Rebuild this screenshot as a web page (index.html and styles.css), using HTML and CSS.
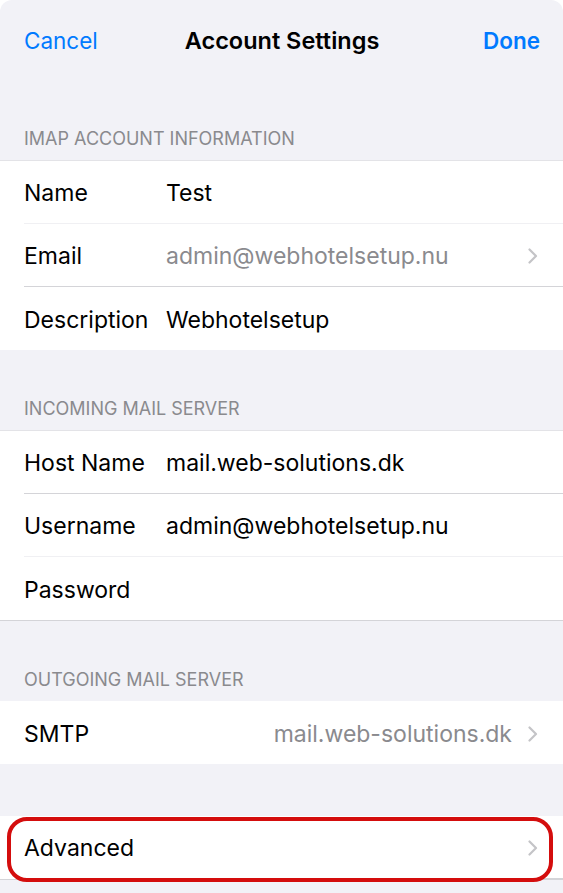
FILE: index.html
```html
<!DOCTYPE html>
<html lang="en">
<head>
  <meta charset="UTF-8">
  <meta name="viewport" content="width=device-width, initial-scale=1.0">
  <title>Account Settings</title>
  <link rel="stylesheet" href="styles.css">
</head>
<body>

  <div class="sheet">
    <div class="nav">
      <span class="nav-btn">Cancel</span>
      <span class="nav-title">Account Settings</span>
      <span class="nav-btn done">Done</span>
    </div>

    <div class="section-header first">IMAP ACCOUNT INFORMATION</div>
    <div class="group top-line">
      <div class="row"><div class="row-inner faint">
        <span class="label">Name</span><span class="value">Test</span>
      </div></div>
      <div class="row"><div class="row-inner">
        <span class="label">Email</span><span class="value muted">admin@webhotelsetup.nu</span>
        <svg class="chevron" width="10" height="16" viewBox="0 0 10 16"><path d="M1.5 1.5 L8 8 L1.5 14.5" /></svg>
      </div></div>
      <div class="row"><div class="row-inner">
        <span class="label">Description</span><span class="value">Webhotelsetup</span>
      </div></div>
    </div>

    <div class="section-header">INCOMING MAIL SERVER</div>
    <div class="group top-line bottom-line">
      <div class="row"><div class="row-inner">
        <span class="label">Host Name</span><span class="value">mail.web-solutions.dk</span>
      </div></div>
      <div class="row"><div class="row-inner faint">
        <span class="label">Username</span><span class="value">admin@webhotelsetup.nu</span>
      </div></div>
      <div class="row"><div class="row-inner">
        <span class="label">Password</span><span class="value"></span>
      </div></div>
    </div>

    <div class="section-header">OUTGOING MAIL SERVER</div>
    <div class="group">
      <div class="row"><div class="row-inner">
        <span class="label">SMTP</span><span class="value right muted">mail.web-solutions.dk</span>
        <svg class="chevron" width="10" height="16" viewBox="0 0 10 16"><path d="M1.5 1.5 L8 8 L1.5 14.5" /></svg>
      </div></div>
    </div>

    <div class="group advanced bottom-line">
      <div class="row"><div class="row-inner">
        <span class="label">Advanced</span><span class="value"></span>
        <svg class="chevron" width="10" height="16" viewBox="0 0 10 16"><path d="M1.5 1.5 L8 8 L1.5 14.5" /></svg>
      </div></div>
      <div class="highlight"></div>
    </div>
  </div>

</body>
</html>
```

FILE: styles.css
```css
body {
  margin: 0;
  padding: 0;
  background: #ffffff;
  font-family: Inter, 'Liberation Sans', sans-serif;
  -webkit-font-smoothing: antialiased;
}
.sheet {
  background: #f2f2f7;
  border-radius: 12px 12px 0 0;
  min-height: 893px;
  overflow: hidden;
}
.nav {
  height: 81px;
  display: grid;
  grid-template-columns: 1fr auto 1fr;
  align-items: center;
  padding: 0 23px 0 24px;
}
.nav-btn {
  color: #007aff;
  font-size: 22.5px;
}
.nav-btn.done {
  font-weight: 600;
  text-align: right;
}
.nav-title {
  font-size: 23.5px;
  font-weight: 600;
  color: #000;
}
.section-header {
  margin-top: 48px;
  padding: 0 24px 10px;
  line-height: 22px;
  font-size: 18px;
  color: #8a8a8e;
}
.section-header.first {
  margin-top: 47px;
}
.group {
  background: #ffffff;
  position: relative;
}
.group.top-line {
  border-top: 1px solid #e3e3e7;
}
.group.bottom-line {
  border-bottom: 1px solid #d4d4d8;
}
.group.advanced {
  margin-top: 52px;
}
.row {
  padding-left: 24px;
}
.row-inner {
  height: 63px;
  box-sizing: border-box;
  display: flex;
  align-items: center;
  padding-right: 25px;
  padding-top: 2px;
  border-bottom: 1px solid #d4d4d8;
  font-size: 23px;
  color: #000;
}
.row-inner.faint {
  border-bottom-color: #f0f0f3;
}
.group .row:last-of-type .row-inner {
  border-bottom: none;
}
.label {
  width: 142px;
  flex-shrink: 0;
}
.value {
  flex: 1;
}
.value.right {
  text-align: right;
  margin-right: 16px;
}
.muted {
  color: #8a8a8e;
}
.chevron {
  flex-shrink: 0;
}
.chevron path {
  fill: none;
  stroke: #c4c4c7;
  stroke-width: 2.2;
  stroke-linecap: round;
  stroke-linejoin: round;
}
.highlight {
  position: absolute;
  left: 7px;
  right: 10px;
  top: 1px;
  bottom: -3px;
  border: 4px solid #d40d0d;
  border-radius: 20px;
  pointer-events: none;
}
```
